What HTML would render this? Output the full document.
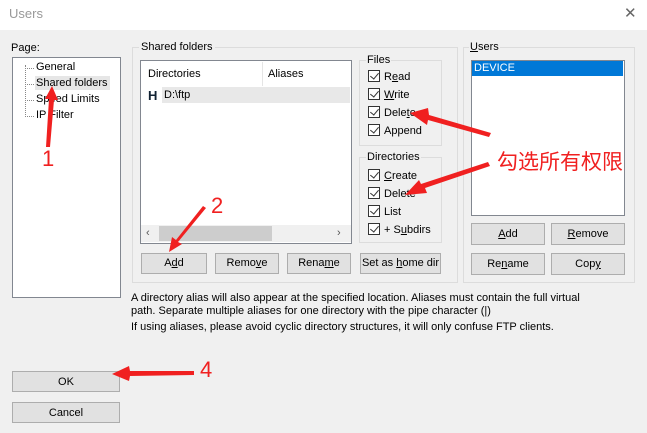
<!DOCTYPE html><html><head><style>
body{margin:0;width:647px;height:433px;background:#f0f0f0;font-family:"Liberation Sans",sans-serif;font-size:11px;color:#000;position:relative;overflow:hidden}
.a{position:absolute;white-space:nowrap}
.btn{position:absolute;background:#e1e1e1;border:1px solid #adadad;box-sizing:border-box;text-align:center;line-height:19px;white-space:nowrap}
.grp{position:absolute;border:1px solid #dcdcdc;box-sizing:border-box}
.cb{position:absolute;width:12px;height:12px;border:1px solid #333;background:#fff;box-sizing:border-box}
.cb:after{content:"";position:absolute;left:3px;top:0px;width:4px;height:7px;border:solid #333;border-width:0 1px 1px 0;transform:rotate(40deg)}
.lb{background:#fff;border:1px solid #828790;box-sizing:border-box;position:absolute}
</style></head><body>
<div class="a" style="left:0;top:0;width:647px;height:30px;background:#fff"></div>
<div class="a" style="left:9px;top:6px;font-size:13px;color:#999">Users</div>
<div class="a" style="left:624px;top:4px;font-size:15px;color:#666;font-weight:100">✕</div>

<div class="a" style="left:11px;top:42px">Page:</div>
<div class="lb" style="left:12px;top:57px;width:109px;height:241px"></div>
<div class="a" style="left:25px;top:65px;height:52px;border-left:1px dotted #888"></div>
<div class="a" style="left:25px;top:68px;width:9px;border-top:1px dotted #888"></div>
<div class="a" style="left:25px;top:84px;width:9px;border-top:1px dotted #888"></div>
<div class="a" style="left:25px;top:100px;width:9px;border-top:1px dotted #888"></div>
<div class="a" style="left:25px;top:116px;width:9px;border-top:1px dotted #888"></div>
<div class="a" style="left:36px;top:61px">General</div>
<div class="a" style="left:35px;top:76px;background:#e6e6e6;padding:1px 2px 1px 1px">Shared folders</div>
<div class="a" style="left:36px;top:93px">Speed Limits</div>
<div class="a" style="left:36px;top:109px">IP Filter</div>

<div class="grp" style="left:132px;top:47px;width:326px;height:236px"></div>
<div class="a" style="left:139px;top:41px;background:#f0f0f0;padding:0 2px">Shared folders</div>
<div class="lb" style="left:140px;top:60px;width:212px;height:184px"></div>
<div class="a" style="left:148px;top:68px">Directories</div>
<div class="a" style="left:262px;top:62px;height:24px;border-left:1px solid #e5e5e5"></div>
<div class="a" style="left:268px;top:68px">Aliases</div>
<div class="a" style="left:162px;top:87px;width:188px;height:16px;background:#e8e8e8"></div>
<div class="a" style="left:148px;top:88px;font-weight:bold;color:#123;font-size:13px">H</div>
<div class="a" style="left:164px;top:89px">D:\ftp</div>
<div class="a" style="left:141px;top:225px;width:210px;height:17px;background:#f0f0f0"></div>
<div class="a" style="left:159px;top:226px;width:113px;height:15px;background:#cdcdcd"></div>
<div class="a" style="left:146px;top:227px;color:#555">‹</div>
<div class="a" style="left:337px;top:227px;color:#555">›</div>
<div class="btn" style="left:141px;top:253px;width:66px;height:21px">A<u>d</u>d</div>
<div class="btn" style="left:215px;top:253px;width:64px;height:21px">Remo<u>v</u>e</div>
<div class="btn" style="left:287px;top:253px;width:64px;height:21px">Rena<u>m</u>e</div>
<div class="btn" style="left:360px;top:253px;width:81px;height:21px">Set as <u>h</u>ome dir</div>

<div class="grp" style="left:359px;top:60px;width:83px;height:86px"></div>
<div class="a" style="left:366px;top:54px;background:#f0f0f0;padding:0 1px">Files</div>
<div class="cb" style="left:368px;top:70px"></div><div class="a" style="left:384px;top:71px">R<u>e</u>ad</div>
<div class="cb" style="left:368px;top:88px"></div><div class="a" style="left:384px;top:89px"><u>W</u>rite</div>
<div class="cb" style="left:368px;top:106px"></div><div class="a" style="left:384px;top:107px">Dele<u>t</u>e</div>
<div class="cb" style="left:368px;top:124px"></div><div class="a" style="left:384px;top:125px">Append</div>
<div class="grp" style="left:359px;top:157px;width:83px;height:86px"></div>
<div class="a" style="left:366px;top:151px;background:#f0f0f0;padding:0 1px">Directories</div>
<div class="cb" style="left:368px;top:169px"></div><div class="a" style="left:384px;top:170px"><u>C</u>reate</div>
<div class="cb" style="left:368px;top:187px"></div><div class="a" style="left:384px;top:188px">Delete</div>
<div class="cb" style="left:368px;top:205px"></div><div class="a" style="left:384px;top:206px">List</div>
<div class="cb" style="left:368px;top:223px"></div><div class="a" style="left:384px;top:224px">+ S<u>u</u>bdirs</div>

<div class="grp" style="left:463px;top:47px;width:172px;height:236px"></div>
<div class="a" style="left:469px;top:41px;background:#f0f0f0;padding:0 1px"><u>U</u>sers</div>
<div class="lb" style="left:471px;top:60px;width:154px;height:156px"></div>
<div class="a" style="left:472px;top:61px;width:151px;height:15px;background:#0078d7;color:#fff;line-height:15px;padding-left:2px;box-sizing:border-box">DEVICE</div>
<div class="btn" style="left:471px;top:223px;width:74px;height:22px;line-height:20px"><u>A</u>dd</div>
<div class="btn" style="left:551px;top:223px;width:74px;height:22px;line-height:20px"><u>R</u>emove</div>
<div class="btn" style="left:471px;top:253px;width:74px;height:22px;line-height:20px">Re<u>n</u>ame</div>
<div class="btn" style="left:551px;top:253px;width:74px;height:22px;line-height:20px">Cop<u>y</u></div>

<div class="a" style="left:131px;top:292px;font-size:11px">A directory alias will also appear at the specified location. Aliases must contain the full virtual</div>
<div class="a" style="left:131px;top:305px;font-size:11px">path. Separate multiple aliases for one directory with the pipe character (|)</div>
<div class="a" style="left:131px;top:321px;font-size:11px">If using aliases, please avoid cyclic directory structures, it will only confuse FTP clients.</div>

<div class="btn" style="left:12px;top:371px;width:108px;height:21px;line-height:20px">OK</div>
<div class="btn" style="left:12px;top:402px;width:108px;height:21px;line-height:20px">Cancel</div>

<div class="a" style="left:497px;top:146px;font-size:21px;color:#f02020;font-family:'Liberation Sans','Noto Sans CJK SC',sans-serif">勾选所有权限</div>
<div class="a" style="left:42px;top:146px;font-size:22px;color:#f02020">1</div>
<div class="a" style="left:211px;top:193px;font-size:22px;color:#f02020">2</div>
<div class="a" style="left:200px;top:357px;font-size:22px;color:#f02020">4</div>
<svg class="a" style="left:0;top:0" width="647" height="433">
<g fill="#f02020">
<polygon points="46,147 50,147 54,100 58,100 52,86 45,99 49,99"/>
<polygon points="206,208 203,206 176,240 172,237 169,252 182,244 178,242"/>
<polygon points="194,371 194,375 130,376 129,381 112,374 129,366 130,371"/>
<polygon points="491,133 489,137 428,120 427,125 410,113 428,108 429,115"/>
<polygon points="488,162 490,166 425,188 427,193 405,195 419,180 421,184"/>
</g></svg>
</body></html>
